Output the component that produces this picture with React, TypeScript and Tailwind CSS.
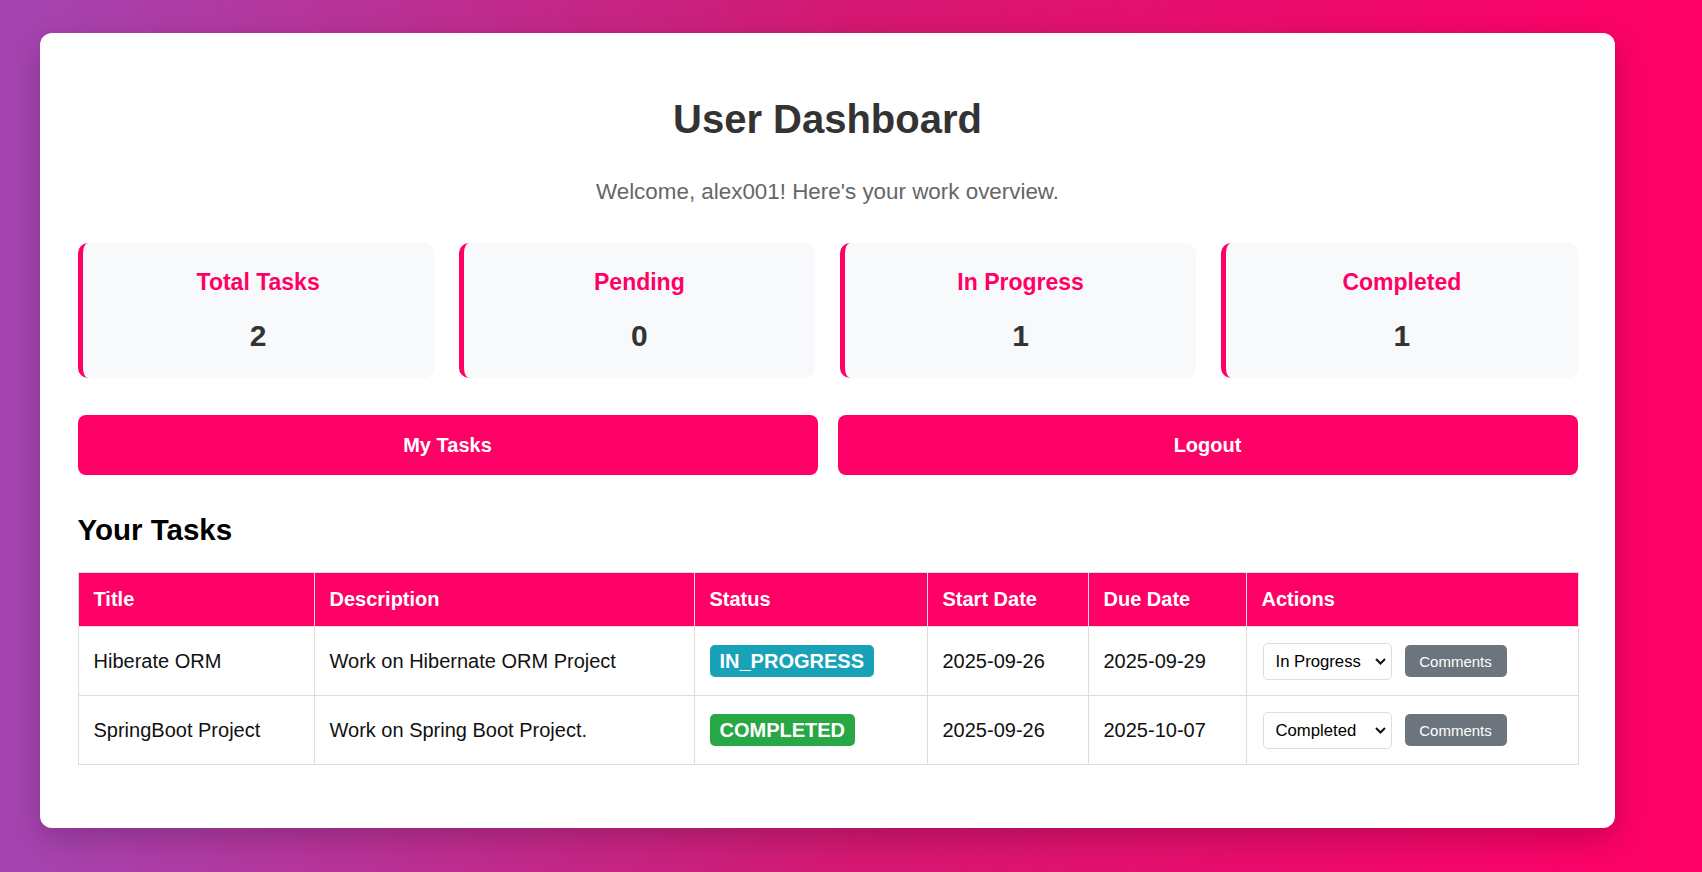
import React from "react"

const stats = [
  { label: "Total Tasks", value: 2 },
  { label: "Pending", value: 0 },
  { label: "In Progress", value: 1 },
  { label: "Completed", value: 1 },
]

const tasks = [
  {
    title: "Hiberate ORM",
    description: "Work on Hibernate ORM Project",
    status: "IN_PROGRESS",
    start: "2025-09-26",
    due: "2025-09-29",
    option: "IN_PROGRESS",
  },
  {
    title: "SpringBoot Project",
    description: "Work on Spring Boot Project.",
    status: "COMPLETED",
    start: "2025-09-26",
    due: "2025-10-07",
    option: "COMPLETED",
  },
]

export default function App() {
  return (
    <div
      className="min-h-screen h-[872px] overflow-hidden bg-[linear-gradient(to_right,#a445b2,#d41872,#ff0066)] pt-[33px] pl-[40px]"
      style={{ fontFamily: '"Liberation Sans", Arial, sans-serif' }}
    >
      <div className="w-[1575px] rounded-[12px] bg-white px-[37.5px] pt-[63px] pb-[63px] shadow-[0_10px_30px_rgba(0,0,0,0.2)]">
        <h1 className="text-center text-[40px] leading-[46px] font-bold text-[#333]">
          User Dashboard
        </h1>
        <p className="mt-[37px] text-center text-[22.4px] leading-[26px] text-[#666]">
          Welcome, alex001! Here's your work overview.
        </p>

        <div className="mt-[38px] grid grid-cols-4 gap-[25px]">
          {stats.map((s) => (
            <div
              key={s.label}
              className="flex h-[135px] flex-col items-center rounded-[10px] border-l-[5px] border-[#ff0066] bg-[#f8f9fa] pt-[25.5px]"
            >
              <h3 className="text-[23px] leading-[26px] font-bold text-[#ff0066]">
                {s.label}
              </h3>
              <p className="mt-[24px] text-[30px] leading-[34px] font-bold text-[#333]">
                {s.value}
              </p>
            </div>
          ))}
        </div>

        <div className="mt-[37px] grid grid-cols-2 gap-[20px]">
          <button className="h-[60px] rounded-[8px] bg-[#ff0066] text-[20px] font-bold text-white">
            My Tasks
          </button>
          <button className="h-[60px] rounded-[8px] bg-[#ff0066] text-[20px] font-bold text-white">
            Logout
          </button>
        </div>

        <h2 className="mt-[38px] text-[29.5px] leading-[34px] font-bold text-black">
          Your Tasks
        </h2>

        <table className="mt-[25px] w-[1500px] table-fixed border-collapse text-[20px] leading-[23px] text-[#111]">
          <colgroup>
            <col className="w-[236px]" />
            <col className="w-[380px]" />
            <col className="w-[233px]" />
            <col className="w-[161px]" />
            <col className="w-[158px]" />
            <col className="w-[332px]" />
          </colgroup>
          <thead>
            <tr className="bg-[#ff0066] text-white">
              {["Title", "Description", "Status", "Start Date", "Due Date", "Actions"].map((h) => (
                <th
                  key={h}
                  className="h-[54px] border border-[#ddd] px-[15px] text-left align-middle font-bold"
                >
                  {h}
                </th>
              ))}
            </tr>
          </thead>
          <tbody>
            {tasks.map((t) => (
              <tr key={t.title}>
                <td className="h-[69px] border border-[#ddd] px-[15px] align-middle">{t.title}</td>
                <td className="border border-[#ddd] px-[15px] align-middle">{t.description}</td>
                <td className="border border-[#ddd] px-[15px] align-middle">
                  <span
                    className={
                      t.status === "COMPLETED"
                        ? "inline-flex h-[32px] items-center rounded-[5px] bg-[#28a745] px-[10px] font-bold text-white"
                        : "inline-flex h-[32px] items-center rounded-[5px] bg-[#17a2b8] px-[10px] font-bold text-white"
                    }
                  >
                    {t.status}
                  </span>
                </td>
                <td className="border border-[#ddd] px-[15px] align-middle">{t.start}</td>
                <td className="border border-[#ddd] px-[15px] align-middle">{t.due}</td>
                <td className="border border-[#ddd] px-[16px] align-middle">
                  <div className="flex items-center gap-[13px]">
                    <div className="relative">
                      <select
                        defaultValue={t.option}
                        className="block h-[37px] w-[129px] appearance-none rounded-[5px] border border-[#ddd] bg-white pl-[12px] text-[16.7px] text-black"
                      >
                        <option value="PENDING">Pending</option>
                        <option value="IN_PROGRESS">In Progress</option>
                        <option value="COMPLETED">Completed</option>
                      </select>
                      <svg
                        className="pointer-events-none absolute right-[6px] top-[15px]"
                        width="11"
                        height="7"
                        viewBox="0 0 11 7"
                        fill="none"
                      >
                        <path d="M1 1l4.5 4.5L10 1" stroke="#111" strokeWidth="2" />
                      </svg>
                    </div>
                    <button className="h-[32px] w-[102px] rounded-[5px] bg-[#6c757d] text-[15px] text-white">
                      Comments
                    </button>
                  </div>
                </td>
              </tr>
            ))}
          </tbody>
        </table>
      </div>
    </div>
  )
}
